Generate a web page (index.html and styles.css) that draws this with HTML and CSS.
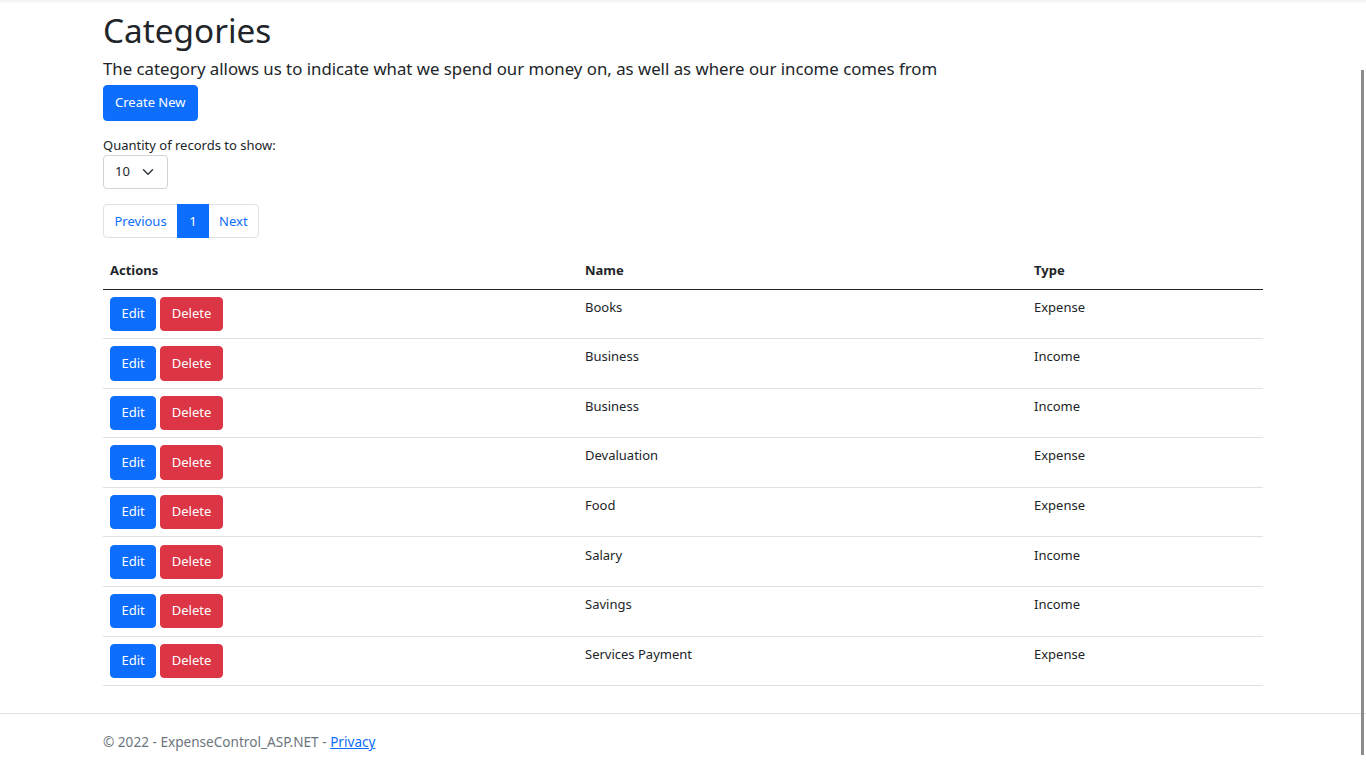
FILE: index.html
```html
<!DOCTYPE html>
<html lang="en">
<head>
<meta charset="utf-8">
<title>Categories - ExpenseControl_ASP.NET</title>
<link rel="stylesheet" href="styles.css">
</head>
<body>
<div class="nav-shadow"></div>
<main class="container">
  <h1 class="title">Categories</h1>
  <p class="lead">The category allows us to indicate what we spend our money on, as well as where our income comes from</p>
  <a class="btn btn-primary" href="#">Create New</a>

  <div class="qty">
    <label class="qty-label">Quantity of records to show:</label>
    <div class="select">
      <span>10</span>
      <svg class="chev" viewBox="0 0 16 16" width="12" height="12"><path d="M2 5l6 6 6-6" fill="none" stroke="#343a40" stroke-width="2" stroke-linecap="round" stroke-linejoin="round"/></svg>
    </div>
  </div>

  <nav class="pagination">
    <a class="page first" href="#">Previous</a>
    <a class="page active" href="#">1</a>
    <a class="page last" href="#">Next</a>
  </nav>

  <table class="table">
    <thead>
      <tr><th class="c-actions">Actions</th><th class="c-name">Name</th><th class="c-type">Type</th></tr>
    </thead>
    <tbody>
      <tr><td><a class="btn btn-primary sm" href="#">Edit</a><a class="btn btn-danger sm" href="#">Delete</a></td><td>Books</td><td>Expense</td></tr>
      <tr><td><a class="btn btn-primary sm" href="#">Edit</a><a class="btn btn-danger sm" href="#">Delete</a></td><td>Business</td><td>Income</td></tr>
      <tr><td><a class="btn btn-primary sm" href="#">Edit</a><a class="btn btn-danger sm" href="#">Delete</a></td><td>Business</td><td>Income</td></tr>
      <tr><td><a class="btn btn-primary sm" href="#">Edit</a><a class="btn btn-danger sm" href="#">Delete</a></td><td>Devaluation</td><td>Expense</td></tr>
      <tr><td><a class="btn btn-primary sm" href="#">Edit</a><a class="btn btn-danger sm" href="#">Delete</a></td><td>Food</td><td>Expense</td></tr>
      <tr><td><a class="btn btn-primary sm" href="#">Edit</a><a class="btn btn-danger sm" href="#">Delete</a></td><td>Salary</td><td>Income</td></tr>
      <tr><td><a class="btn btn-primary sm" href="#">Edit</a><a class="btn btn-danger sm" href="#">Delete</a></td><td>Savings</td><td>Income</td></tr>
      <tr><td><a class="btn btn-primary sm" href="#">Edit</a><a class="btn btn-danger sm" href="#">Delete</a></td><td>Services Payment</td><td>Expense</td></tr>
    </tbody>
  </table>
</main>
<footer class="footer">
  <div class="container footer-inner">&copy; 2022 - ExpenseControl_ASP.NET - <a href="#">Privacy</a></div>
</footer>
<div class="scroll-thumb"></div>
</body>
</html>
```
FILE: styles.css
```css
* { box-sizing: border-box; }
html, body { margin: 0; padding: 0; }
body {
  font-family: "Segoe UI", "Noto Sans", "Open Sans", sans-serif;
  font-size: 13px;
  line-height: 21.6px;
  color: #212529;
  background: #fff;
  height: 768px;
  overflow: hidden;
}
.nav-shadow {
  height: 4px;
  background: linear-gradient(to bottom, #f2f2f2, #fff);
}
.container {
  width: 1160px;
  margin: 0 auto;
}
.title {
  font-size: 33.3px;
  font-weight: 400;
  line-height: 43px;
  margin: 5px 0 0;
}
.lead {
  font-size: 16.8px;
  line-height: 25px;
  margin: 4px 0 4px;
}
.btn {
  display: inline-block;
  padding: 6px 11px;
  border-radius: 4px;
  color: #fff;
  text-decoration: none;
  line-height: 21.6px;
  border: 1px solid transparent;
}
.btn-primary { background: #0d6efd; border-color: #0d6efd; }
.btn-danger { background: #dc3545; border-color: #dc3545; }
.btn.sm { padding: 5.3px 10.5px; }
.btn.sm + .btn.sm { margin-left: 4px; }

.qty { margin-top: 15px; }
.qty-label { display: block; line-height: 19px; }
.select {
  width: 65px;
  height: 34px;
  border: 1px solid #ced4da;
  border-radius: 4px;
  display: flex;
  align-items: center;
  justify-content: space-between;
  padding: 0 13px 0 11px;
}
.chev { display: block; }

.pagination {
  display: flex;
  margin-top: 15px;
}
.page {
  display: block;
  height: 34px;
  line-height: 32px;
  padding: 0 11px;
  border: 1px solid #dee2e6;
  color: #0d6efd;
  text-decoration: none;
  margin-left: -1px;
}
.page.first { margin-left: 0; padding: 0 10.5px; border-radius: 4px 0 0 4px; }
.page.last { padding: 0 10.5px; border-radius: 0 4px 4px 0; }
.page.active { background: #0d6efd; border-color: #0d6efd; color: #fff; position: relative; }

.table {
  width: 100%;
  border-collapse: collapse;
  margin-top: 15px;
}
.table th, .table td {
  text-align: left;
  vertical-align: top;
  padding: 7.2px 7px;
  border-bottom: 1px solid #dee2e6;
}
.table th { font-weight: 700; border-bottom: 1px solid #212529; }
.c-actions { width: 475px; }
.c-name { width: 449px; }

.footer {
  margin-top: 27px;
  border-top: 1px solid #dee2e6;
  color: #6c757d;
  line-height: 54px;
  font-size: 13.6px;
}
.footer-inner { padding-top: 1px; }
.footer a { color: #0d6efd; }

.scroll-thumb {
  position: fixed;
  left: 1361px;
  top: 70px;
  width: 3px;
  height: 685px;
  background: #8c8c8c;
}
```
